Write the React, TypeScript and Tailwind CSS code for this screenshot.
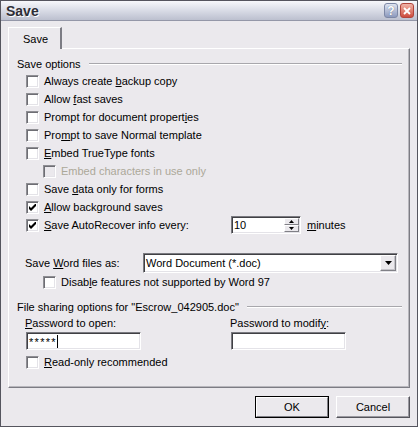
import React from "react";
import clsx from "clsx";

const U = ({ children }: { children: React.ReactNode }) => (
  <span className="underline underline-offset-[1px] decoration-[1px]">{children}</span>
);

function Box({ checked, disabled }: { checked?: boolean; disabled?: boolean }) {
  return (
    <div
      className={clsx(
        "w-[13px] h-[13px] shrink-0 border border-t-[#8e8e93] border-l-[#8e8e93] border-r-white border-b-white shadow-[inset_1px_1px_0_#6e6e74,inset_-1px_-1px_0_#e4e3e8] flex items-center justify-center",
        disabled ? "bg-[#ebe9ed]" : "bg-white"
      )}
    >
      {checked && (
        <svg width="7" height="7" viewBox="0 0 7 7">
          <path d="M0 2 L2 4 L7 -1 L7 2 L2 7 L0 5 Z" fill="#000" />
        </svg>
      )}
    </div>
  );
}

function Check({
  children,
  checked,
  disabled,
  indent,
  className,
}: {
  children: React.ReactNode;
  checked?: boolean;
  disabled?: boolean;
  indent?: boolean;
  className?: string;
}) {
  return (
    <div className={clsx("flex items-center h-[18px] gap-[5px]", indent ? "pl-[34px]" : "pl-[17px]", className)}>
      <Box checked={checked} disabled={disabled} />
      <span className={clsx(disabled ? "text-[#aca899]" : "text-black")}>{children}</span>
    </div>
  );
}

const sunken =
  "border border-t-[#7a7a80] border-l-[#7a7a80] border-r-white border-b-white shadow-[inset_1px_1px_0_#404044,inset_-1px_-1px_0_#e4e3e8] bg-white";

function Header({ children }: { children: React.ReactNode }) {
  return (
    <div className="flex items-center h-[14px] pl-[8px] pr-[7px]">
      <span className="shrink-0">{children}</span>
      <div className="flex-1 h-[2px] border-t border-t-[#a8a7ac] border-b border-b-white ml-[8px]" />
    </div>
  );
}

export default function App() {
  return (
    <div
      className="w-[418px] h-[427px] bg-[#ebe9ed] border border-[#55555e] flex flex-col text-[11px] leading-[13px] text-black"
      style={{ fontFamily: '"Liberation Sans", Arial, sans-serif' }}
    >
      {/* Title bar */}
      <div className="h-[20px] shrink-0 flex items-center pl-[5px] pr-[3px] bg-gradient-to-b from-[#f7f8fb] via-[#d9dce6] to-[#bcc0cf] border-b border-b-[#9497a8]">
        <span className="text-[14px] font-bold text-[#2e2e36] leading-[16px] [text-shadow:1px_1px_0_#ffffff]">Save</span>
        <div className="ml-auto flex gap-[2px] items-center">
          <div className="w-[14px] h-[15px] rounded-[3px] border border-[#7d88a6] bg-gradient-to-b from-[#dfe4f0] to-[#8d9abd] flex items-center justify-center">
            <span className="text-white font-bold text-[12px] leading-[12px] [text-shadow:0_0_1px_#53607f]">?</span>
          </div>
          <div className="w-[14px] h-[15px] rounded-[3px] border border-[#b2453c] bg-gradient-to-b from-[#f0b3a8] to-[#cc4a3c] flex items-center justify-center">
            <svg width="8" height="8" viewBox="0 0 8 8">
              <path d="M1 1 L7 7 M7 1 L1 7" stroke="#fff" strokeWidth="1.8" />
            </svg>
          </div>
        </div>
      </div>

      {/* Body */}
      <div className="flex-1 flex flex-col pl-[7px] pr-[7px] pt-[6px]">
        {/* Tab strip */}
        <div className="flex h-[22px]">
          <div className="w-[54px] h-[22px] border-t border-l border-t-white border-l-white border-r-2 border-r-[#7c7c84] bg-[#ebe9ed] flex items-center pl-[14px] pt-[2px] relative z-10">
            Save
          </div>
          <div className="flex-1" />
        </div>
        {/* Panel */}
        <div className="h-[340px] -mt-[1px] border-l border-t border-l-white border-t-white border-r border-r-[#7c7c84] border-b border-b-[#7c7c84] shadow-[inset_-1px_-1px_0_#b8b7bd] flex flex-col pt-[8px]">
          <Header>Save options</Header>
          <div className="mt-[1px] flex flex-col">
            <Check>
              Always create <U>b</U>ackup copy
            </Check>
            <Check>
              Allow <U>f</U>ast saves
            </Check>
            <Check>
              Prompt for document propert<U>i</U>es
            </Check>
            <Check>
              Pro<U>m</U>pt to save Normal template
            </Check>
            <Check>
              <U>E</U>mbed TrueType fonts
            </Check>
            <Check indent disabled>
              Embed characters in use only
            </Check>
            <Check>
              Save <U>d</U>ata only for forms
            </Check>
            <Check checked>
              <U>A</U>llow background saves
            </Check>
            <div className="flex items-center h-[18px] pl-[17px]">
              <Box checked />
              <span className="w-[192px] pl-[5px]">
                <U>S</U>ave AutoRecover info every:
              </span>
              <div className={clsx("w-[70px] h-[18px] flex items-center", sunken)}>
                <span className="pl-[2px] flex-1">10</span>
                <div className="w-[16px] h-full flex flex-col py-[1px] pr-[1px]">
                  <div className="flex-1 bg-[#ebe9ed] border border-t-white border-l-white border-r-[#808086] border-b-[#808086] flex items-center justify-center">
                    <svg width="5" height="3" viewBox="0 0 5 3">
                      <path d="M2.5 0 L5 3 L0 3 Z" fill="#000" />
                    </svg>
                  </div>
                  <div className="flex-1 bg-[#ebe9ed] border border-t-white border-l-white border-r-[#808086] border-b-[#808086] flex items-center justify-center">
                    <svg width="5" height="3" viewBox="0 0 5 3">
                      <path d="M0 0 L5 0 L2.5 3 Z" fill="#000" />
                    </svg>
                  </div>
                </div>
              </div>
              <span className="ml-[6px]">
                <U>m</U>inutes
              </span>
            </div>
          </div>

          {/* Save Word files as */}
          <div className="mt-[19px] flex items-center h-[20px] pl-[16px]">
            <span className="w-[118px]">
              Save <U>W</U>ord files as:
            </span>
            <div className={clsx("w-[255px] h-[20px] flex items-center", sunken)}>
              <span className="pl-[2px] flex-1">Word Document (*.doc)</span>
              <div className="w-[16px] h-[16px] mr-[1px] bg-[#ebe9ed] border border-t-white border-l-white border-r-[#808086] border-b-[#808086] shadow-[inset_-1px_-1px_0_#c4c3c9] flex items-center justify-center">
                <svg width="7" height="4" viewBox="0 0 7 4">
                  <path d="M0 0 L7 0 L3.5 4 Z" fill="#000" />
                </svg>
              </div>
            </div>
          </div>
          <Check indent>
            Disab<U>l</U>e features not supported by Word 97
          </Check>

          {/* File sharing */}
          <div className="mt-[9px]">
            <Header>File sharing options for "Escrow_042905.doc"</Header>
          </div>
          <div className="mt-[2px] grid grid-cols-[205px_115px] pl-[16px]">
            <div className="h-[14px] flex items-center">
              <span>
                <U>P</U>assword to open:
              </span>
            </div>
            <div className="h-[14px] flex items-center">
              <span>
                Password to modif<U>y</U>:
              </span>
            </div>
            <div className="mt-[2px] pl-[1px]">
              <div className={clsx("w-[115px] h-[18px] flex items-center", sunken)}>
                <span className="pl-[2px] text-[11px] tracking-[1.3px] leading-[11px] pt-[3px]">*****</span>
                <span className="w-[1px] h-[13px] bg-black" />
              </div>
            </div>
            <div className="mt-[2px] pl-[1px]">
              <div className={clsx("w-[115px] h-[18px]", sunken)} />
            </div>
          </div>
          <Check className="mt-[3px]">
            <U>R</U>ead-only recommended
          </Check>
        </div>

        {/* Buttons */}
        <div className="mt-[8px] flex justify-end gap-[7px]">
          <div className="w-[74px] h-[22px] border border-black">
            <div className="w-full h-full border border-t-white border-l-white border-r-[#808086] border-b-[#808086] flex items-center justify-center bg-[#ebe9ed]">
              OK
            </div>
          </div>
          <div className="w-[74px] h-[22px] border border-t-white border-l-white border-r-[#55555c] border-b-[#55555c] shadow-[inset_-1px_-1px_0_#9a99a0] flex items-center justify-center">
            Cancel
          </div>
        </div>
      </div>
    </div>
  );
}
